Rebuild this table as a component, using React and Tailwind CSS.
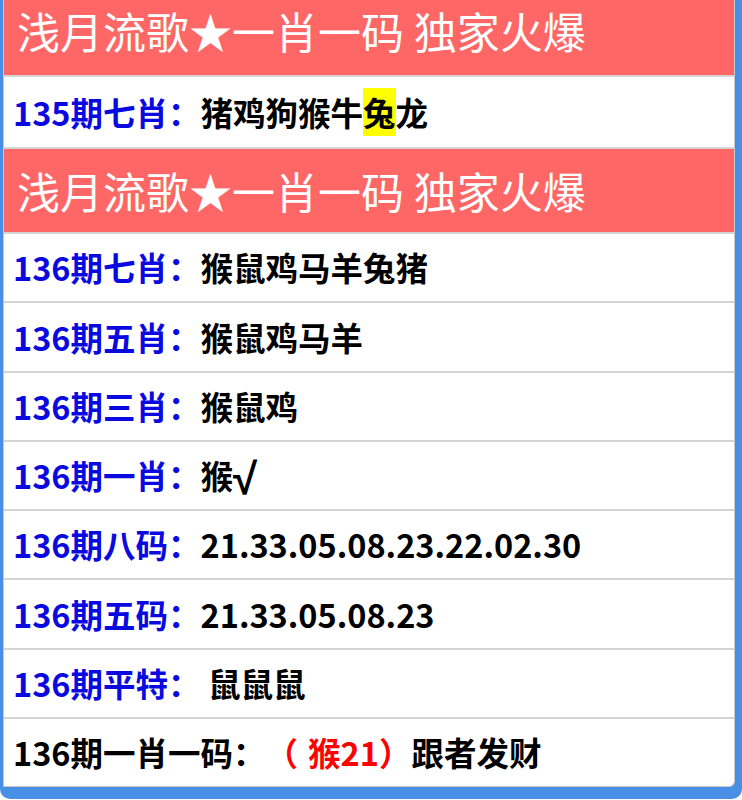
import React from 'react';

const font = { fontFamily: '"Noto Sans CJK SC", "Noto Sans", sans-serif' };

const rows = [
  { label: '136期七肖：', value: '猴鼠鸡马羊兔猪' },
  { label: '136期五肖：', value: '猴鼠鸡马羊' },
  { label: '136期三肖：', value: '猴鼠鸡' },
  { label: '136期一肖：', value: '猴', check: true },
  { label: '136期八码：', value: '21.33.05.08.23.22.02.30' },
  { label: '136期五码：', value: '21.33.05.08.23' },
  { label: '136期平特：', value: ' 鼠鼠鼠' },
];

const Header = ({ className = '' }) => (
  <div className={`bg-[#ff6666] flex items-center pl-[13px] text-white text-[43px] leading-[1.2] whitespace-pre ${className}`}>
    浅月流歌★一肖一码 独家火爆
  </div>
);

const Row = ({ children, className = 'h-[69.3px]' }) => (
  <div className={`${className} border-t-2 border-[#d4d4d4] flex items-center pl-[9px] text-[32.5px] font-bold text-black whitespace-pre`}>
    {children}
  </div>
);

export default function App() {
  return (
    <div className="w-[742px] h-[800px] overflow-hidden bg-white" style={font}>
      <div className="bg-[#4a8fe6] pl-[3px] pr-[7px] pb-[12px] rounded-b-[10px]">
        <div className="bg-white border-l border-r border-b border-[#c8c8c8] rounded-br-[6px] overflow-hidden">
          <Header className="h-[75px] pb-[14px]" />
          <Row className="h-[72px]">
            <span className="text-[#0a0ae0]">135期七肖：</span>
            猪鸡狗猴牛<span className="bg-[#ffff00]">兔</span>龙
          </Row>
          <Header className="h-[85px] border-t-2 border-[#d4d4d4]" />
          {rows.map((r) => (
            <Row key={r.label}>
              <span className="text-[#0a0ae0]">{r.label}</span>
              {r.value}
              {r.check && (
                <span className="text-[44px] leading-none font-bold pt-[6px]" style={{ fontFamily: '"Liberation Sans", sans-serif' }}>√</span>
              )}
            </Row>
          ))}
          <Row>
            <span>136期一肖一码：</span>
            <span className="text-[#ff0000] pr-[10px]">（</span>
            <span className="text-[#ff0000]">猴21</span>
            <span className="text-[#ff0000]">）</span>
            跟者发财
          </Row>
        </div>
      </div>
    </div>
  );
}
